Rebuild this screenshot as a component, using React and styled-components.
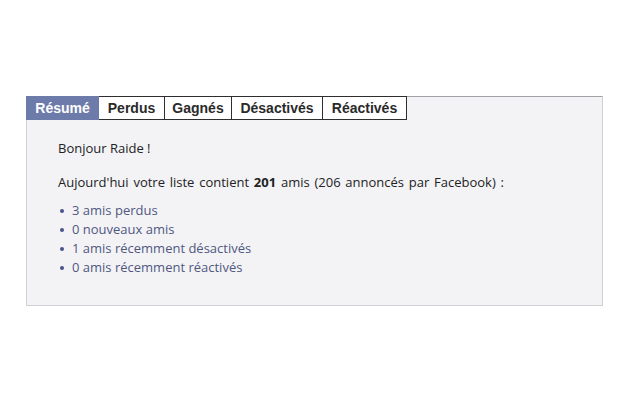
import React from "react";
import styled, { createGlobalStyle } from "styled-components";

const Global = createGlobalStyle`
  html, body { margin: 0; padding: 0; background: #ffffff; }
  body { font-family: "Liberation Sans", Arial, sans-serif; }
`;

const Page = styled.div`
  padding: 96px 37px 0 26px;
`;

const Panel = styled.div`
  background: #f3f3f6;
  border: 1px solid #cfcfd4;
  border-top: 1px solid #a0a0a6;
  height: 210px;
  box-sizing: border-box;
`;

const TabBar = styled.div`
  display: flex;
  margin: -1px 0 0 -1px;
`;

const Tab = styled.div`
  box-sizing: border-box;
  height: 24px;
  width: ${(p) => p.w}px;
  display: flex;
  align-items: center;
  justify-content: center;
  font-size: 14px;
  font-weight: bold;
  color: ${(p) => (p.active ? "#ffffff" : "#2a2a2a")};
  background: ${(p) => (p.active ? "#6d7bab" : "#ffffff")};
  border: 1px solid ${(p) => (p.active ? "#6d7bab" : "#2e2e2e")};
  border-left-width: ${(p) => (p.first ? 1 : 0)}px;
`;

const Content = styled.div`
  padding: 19px 0 0 31px;
  font-family: "Open Sans", "Liberation Sans", sans-serif;
  font-size: 13px;
  color: #222222;
  line-height: 19px;
`;

const Para = styled.p`
  margin: 0 0 ${(p) => p.gap}px 0;
  word-spacing: ${(p) => p.ws || 0}px;
`;

const List = styled.ul`
  list-style: none;
  margin: 0;
  padding: 0;
`;

const Item = styled.li`
  display: flex;
  align-items: center;
  color: #50577f;
  &::before {
    content: "";
    width: 4px;
    height: 4px;
    border-radius: 50%;
    background: #4a5486;
    margin: 0 8px 0 2px;
  }
`;

const tabs = [
  { label: "Résumé", w: 73 },
  { label: "Perdus", w: 66 },
  { label: "Gagnés", w: 67 },
  { label: "Désactivés", w: 91 },
  { label: "Réactivés", w: 84 },
];

export default function App() {
  return (
    <>
      <Global />
      <Page>
        <Panel>
          <TabBar>
            {tabs.map((t, i) => (
              <Tab key={t.label} w={t.w} active={i === 0} first={i === 0}>
                {t.label}
              </Tab>
            ))}
          </TabBar>
          <Content>
            <Para gap={15}>Bonjour Raide !</Para>
            <Para gap={9} ws={1.4}>
              Aujourd'hui votre liste contient <b>201</b> amis (206 annoncés par Facebook) :
            </Para>
            <List>
              <Item>3 amis perdus</Item>
              <Item>0 nouveaux amis</Item>
              <Item>1 amis récemment désactivés</Item>
              <Item>0 amis récemment réactivés</Item>
            </List>
          </Content>
        </Panel>
      </Page>
    </>
  );
}
